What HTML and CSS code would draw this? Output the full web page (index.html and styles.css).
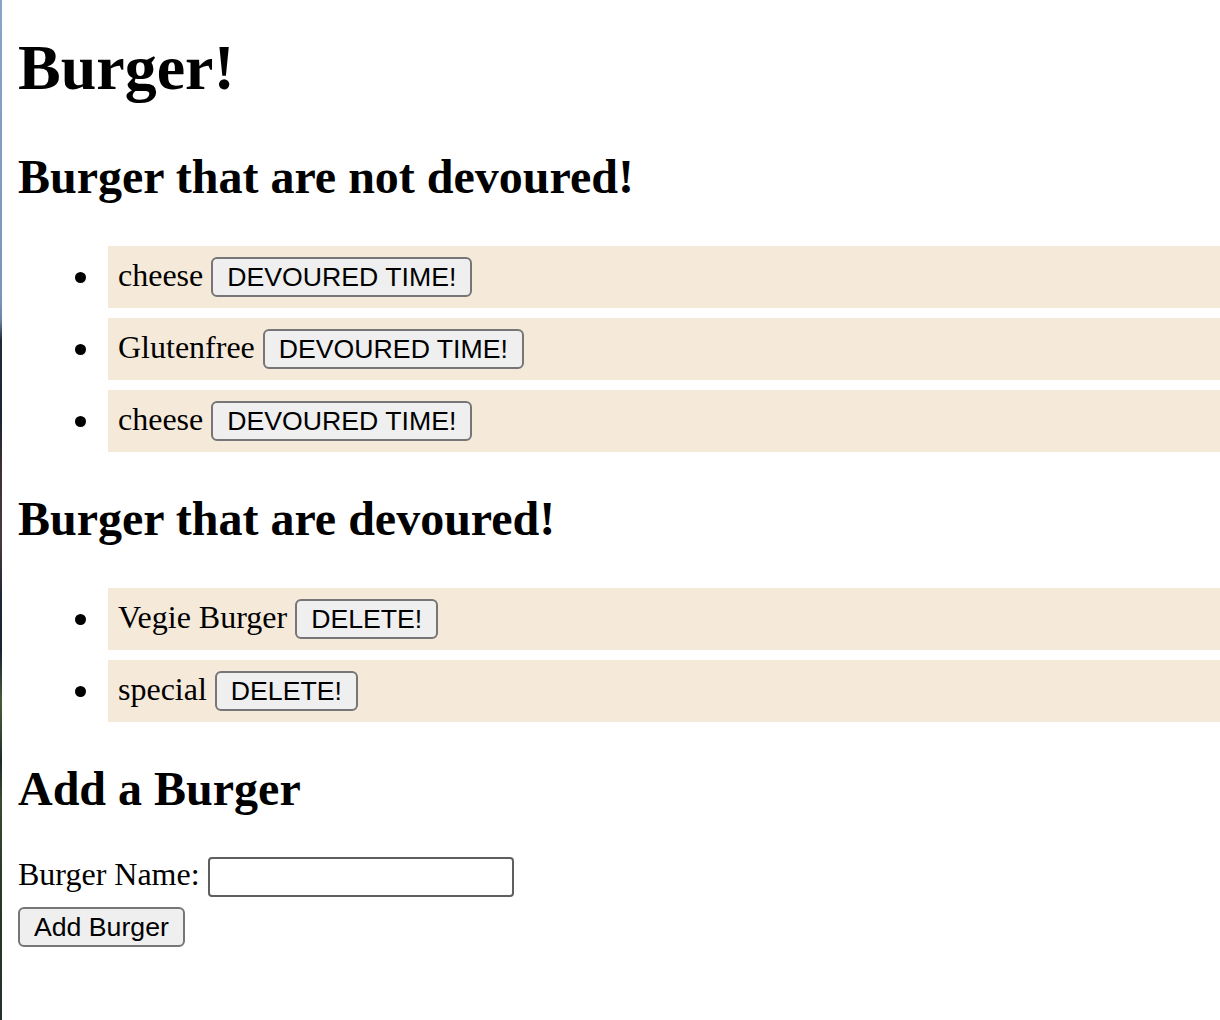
FILE: index.html
```html
<!DOCTYPE html>
<html lang="en">
<head>
<meta charset="utf-8">
<title>Burger!</title>
<link rel="stylesheet" href="styles.css">
</head>
<body>
<div class="desk-edge"></div>
<main class="page">
  <h1 class="title">Burger!</h1>

  <h2 class="section-title">Burger that are not devoured!</h2>
  <ul class="burger-list">
    <li class="burger-item">cheese <button type="button" class="btn">DEVOURED TIME!</button></li>
    <li class="burger-item">Glutenfree <button type="button" class="btn">DEVOURED TIME!</button></li>
    <li class="burger-item">cheese <button type="button" class="btn">DEVOURED TIME!</button></li>
  </ul>

  <h2 class="section-title">Burger that are devoured!</h2>
  <ul class="burger-list">
    <li class="burger-item">Vegie Burger <button type="button" class="btn">DELETE!</button></li>
    <li class="burger-item">special <button type="button" class="btn">DELETE!</button></li>
  </ul>

  <h2 class="section-title">Add a Burger</h2>
  <form class="add-form">
    <label for="burger-name" class="field-label">Burger Name:</label> <input id="burger-name" class="field-input" type="text"><br>
    <button type="button" class="btn add-btn">Add Burger</button>
  </form>
</main>
</body>
</html>
```
FILE: styles.css
```css
html, body {
  background: #ffffff;
}

body {
  margin: 0 0 0 18px;
  font-family: "Liberation Serif", "Times New Roman", serif;
  font-size: 32px;
  line-height: 36px;
  color: #000000;
}

.desk-edge {
  position: fixed;
  left: 0;
  top: 0;
  width: 2px;
  height: 100%;
  background: linear-gradient(
    to bottom,
    #86a6c9 0px,
    #7896ba 300px,
    #6a86a6 320px,
    #22293a 340px,
    #1c2433 420px,
    #3e3034 470px,
    #4a3a3e 540px,
    #1d2536 600px,
    #1a2233 650px,
    #4a5a3c 700px,
    #3a4a32 730px,
    #1e2a2a 760px,
    #3b4a30 800px,
    #2c3828 880px,
    #27302a 1020px
  );
}

.title {
  font-size: 64px;
  line-height: 72px;
  font-weight: bold;
  margin: 32px 0 46px;
}

.section-title {
  font-size: 48px;
  line-height: 54px;
  font-weight: bold;
  margin: 40px 0 42px;
}

.burger-list {
  margin: 0;
  padding-left: 80px;
  list-style: none;
}

.burger-item {
  position: relative;
  margin: 10px 0 10px 10px;
  padding: 11px 10px;
  background: #f5eada;
}

.burger-item::before {
  content: "";
  position: absolute;
  left: -33px;
  top: 26px;
  width: 11px;
  height: 11px;
  border-radius: 50%;
  background: #000000;
}

.btn {
  font-family: "Liberation Sans", Arial, sans-serif;
  font-size: 26.67px;
  line-height: 32px;
  margin: 0;
  padding: 2px 14px;
  border: 2px solid #767676;
  border-radius: 6px;
  background: #efefef;
  color: #000000;
}

.add-form {
  margin: -2px 0 0;
}

.field-input {
  box-sizing: border-box;
  width: 306px;
  height: 40px;
  margin: 0;
  padding: 2px 4px;
  border: 2px solid #5f5f5f;
  border-radius: 4px;
  background: #ffffff;
  font-family: "Liberation Sans", Arial, sans-serif;
  font-size: 26.67px;
  line-height: 32px;
}

.add-btn {
  margin-top: 10px;
}
```
